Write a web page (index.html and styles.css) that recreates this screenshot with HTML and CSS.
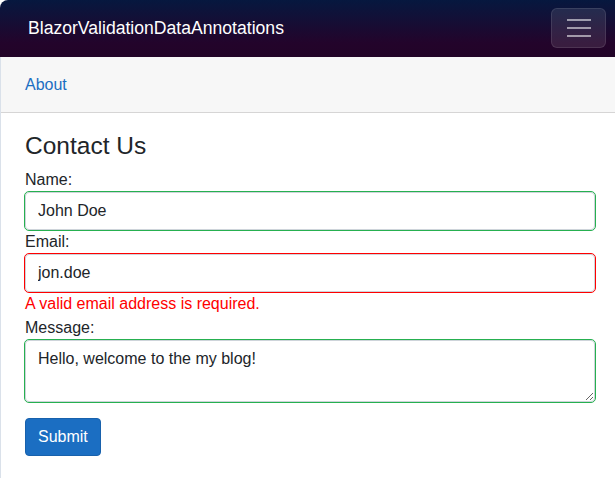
FILE: index.html
```html
<!DOCTYPE html>
<html lang="en">
<head>
<meta charset="utf-8">
<title>BlazorValidationDataAnnotations</title>
<link rel="stylesheet" href="styles.css">
</head>
<body>
<div class="page">
  <header class="sidebar">
    <a class="brand" href="#">BlazorValidationDataAnnotations</a>
    <button class="toggler" type="button" aria-label="Navigation menu">
      <svg width="30" height="30" viewBox="0 0 30 30" aria-hidden="true">
        <path d="M3 7h24M3 15h24M3 23h24" stroke="rgba(255,255,255,0.55)" stroke-width="2" fill="none"/>
      </svg>
    </button>
  </header>
  <main class="main">
    <div class="top-row">
      <a href="#" class="top-link">About</a>
    </div>
    <article class="content">
      <h3 class="title">Contact Us</h3>
      <form class="contact-form">
        <label class="field-label" for="name">Name:</label>
        <input id="name" class="form-control valid" type="text" value="John Doe">
        <label class="field-label" for="email">Email:</label>
        <input id="email" class="form-control invalid" type="text" value="jon.doe">
        <div class="validation-message">A valid email address is required.</div>
        <label class="field-label" for="message">Message:</label>
        <textarea id="message" class="form-control valid" rows="2">Hello, welcome to the my blog!</textarea>
        <button type="button" class="btn-primary">Submit</button>
      </form>
    </article>
  </main>
</div>
</body>
</html>
```
FILE: styles.css
```css
* {
  box-sizing: border-box;
}

html, body {
  margin: 0;
  padding: 0;
  background: #ffffff;
}

body {
  font-family: "Liberation Sans", Arial, Helvetica, sans-serif;
  font-size: 16px;
  line-height: 1.5;
  color: #212529;
}

.page {
  display: flex;
  flex-direction: column;
  min-height: 478px;
  border-top-left-radius: 8px;
  overflow: hidden;
}

.sidebar {
  height: 57px;
  display: flex;
  align-items: center;
  justify-content: space-between;
  padding: 0 9px 0 28px;
  background-image: linear-gradient(180deg, #06183f 0%, #23042b 75%, #220427 100%);
}

.brand {
  color: #ffffff;
  font-size: 17.6px;
  line-height: 1.5;
  text-decoration: none;
  padding-bottom: 1px;
}

.toggler {
  width: 55px;
  height: 40px;
  margin-top: -1px;
  padding: 0;
  display: flex;
  align-items: center;
  justify-content: center;
  background-color: rgba(255, 255, 255, 0.1);
  border: 1px solid rgba(255, 255, 255, 0.1);
  border-radius: 6px;
}

.toggler svg {
  display: block;
}

.main {
  flex: 1;
  border-left: 1px solid #dae1ea;
}

.top-row {
  height: 56px;
  display: flex;
  align-items: center;
  padding-left: 24px;
  background-color: #f7f7f7;
  border-bottom: 1px solid #d6d5d5;
}

.top-link {
  color: #1b6ec2;
  text-decoration: none;
  padding-top: 1px;
}

.content {
  padding: 17.6px 20px 0 24px;
}

.title {
  margin: 0 0 8px 0;
  font-size: 24.5px;
  font-weight: 400;
  line-height: 1.2;
}

.contact-form {
  display: flex;
  flex-direction: column;
  align-items: stretch;
}

.field-label {
  display: block;
  line-height: 24px;
}

.form-control {
  display: block;
  width: 100%;
  padding: 6px 12px;
  font-family: inherit;
  font-size: 16px;
  line-height: 24px;
  color: #212529;
  background-color: #ffffff;
  border: 1px solid #ced4da;
  border-radius: 4px;
  margin: 0;
}

textarea.form-control {
  height: 62px;
  resize: vertical;
}

.valid {
  outline: 1px solid #26b050;
}

.invalid {
  outline: 1px solid #ff0000;
}

.validation-message {
  color: #ff0000;
  line-height: 24px;
}

.btn-primary {
  align-self: flex-start;
  margin-top: 16px;
  padding: 6px 12px;
  font-family: inherit;
  font-size: 16px;
  line-height: 24px;
  color: #ffffff;
  background-color: #1b6ec2;
  border: 1px solid #1861ac;
  border-radius: 4px;
}
```
